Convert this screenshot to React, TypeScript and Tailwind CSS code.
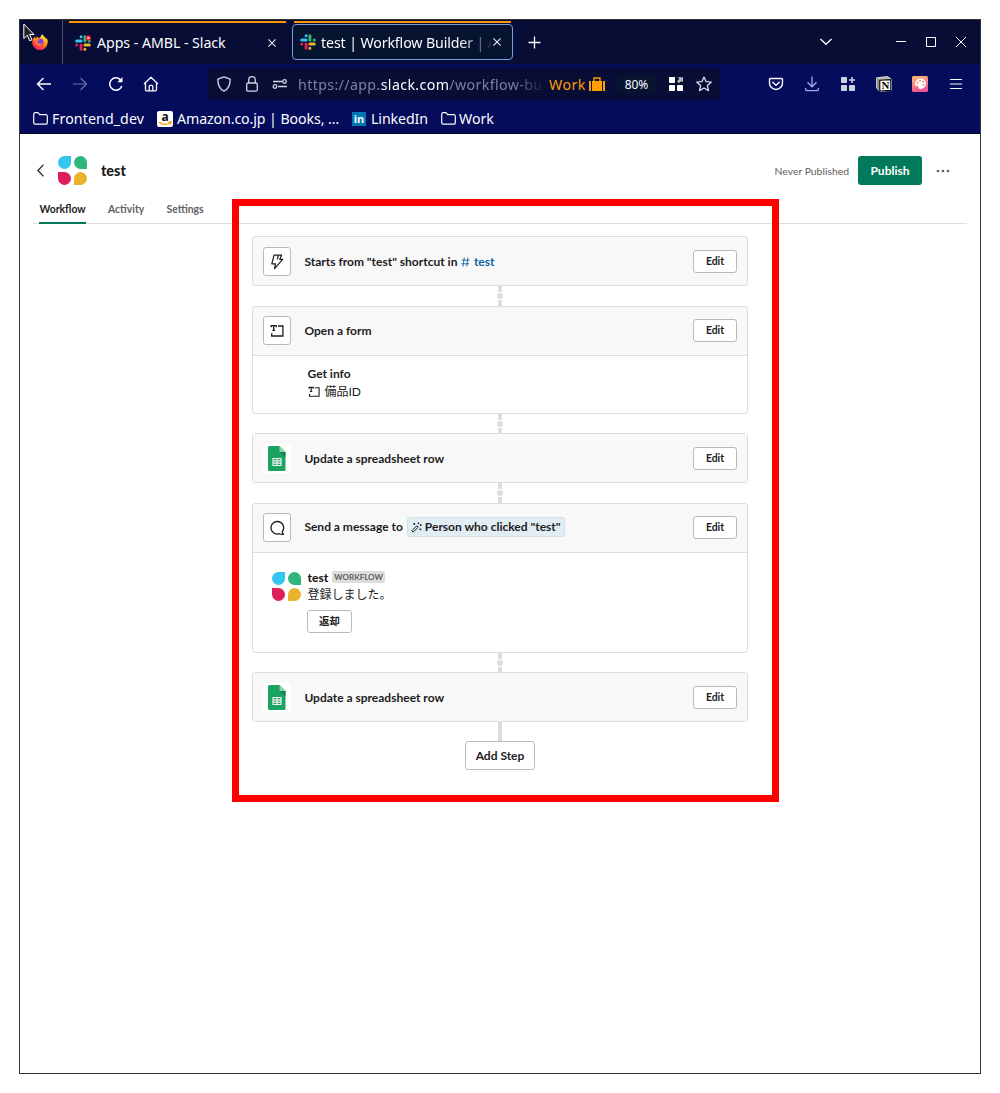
import type { ReactNode } from "react";

function SlackLogo({ badge }: { badge?: boolean }) {
  return (
    <svg width="16" height="16" viewBox="0 0 16 16" className="shrink-0">
      <g strokeWidth="3" strokeLinecap="round" fill="none">
        <path d="M1.7 6.1H6.1M6.1 1.7v.1" stroke="#36c5f0" />
        <path d="M9.9 1.7V6.1M14.2 6.1h.1" stroke="#2eb67d" />
        <path d="M14.3 9.9H9.9M9.9 14.2v.1" stroke="#ecb22e" />
        <path d="M6.1 14.3V9.9M1.7 9.9h.1" stroke="#e01e5a" />
      </g>
      {badge && (
        <>
          <circle cx="13.3" cy="3" r="2.8" fill="#eb1c2c" />
          <circle cx="13.3" cy="3" r="1.1" fill="#fff" />
        </>
      )}
    </svg>
  );
}

function FirefoxLogo() {
  return (
    <svg width="16" height="16" viewBox="0 0 16 16">
      <defs>
        <linearGradient id="fox" x1="0.8" y1="0" x2="0.2" y2="1">
          <stop offset="0" stopColor="#fff44f" />
          <stop offset="0.4" stopColor="#ff980e" />
          <stop offset="0.75" stopColor="#ff3647" />
          <stop offset="1" stopColor="#e31587" />
        </linearGradient>
      </defs>
      <path
        d="M15.5 6c-.4-1-1.1-1.9-1.8-2.2.3.6.4 1.1.4 1.4-.9-2-2.4-2.9-3.6-4.9-1.6.9-2.2 2.4-2.2 3.3-.7 0-1.4.2-2 .6-.5-.5-.4-1.4-.3-1.8-.9.4-1.5 1.1-1.900 1.700-.6 0-.9-.5-.9-1.600C1.400 3.600.3 5.600.2 8a7.700 7.700 0 0 0 15.400 1c.2-1 .2-2.100-.1-3z"
        fill="url(#fox)"
      />
      <circle cx="8" cy="8.200" r="3.400" fill="#7542e5" />
      <path d="M3.500 5.500c1.500-.8 3-.4 4.500.6-1.300 0-1.500 1-2.700 1.200.6 2.700 3.700 3.200 5.600 1.500-.6 3-4 4-6.200 2.200C3 9.600 2.700 7.500 3.500 5.500z" fill="#ff7139" />
    </svg>
  );
}

function Cursor() {
  return (
    <svg width="12" height="20" viewBox="0 0 12 20" className="absolute left-[3px] top-[3px]">
      <path d="M.8 1v14.500l3.500-3.200 2.400 5.500 2.300-1-2.400-5.300h4.400z" fill="#222" stroke="#fff" strokeWidth="1" />
    </svg>
  );
}

function Petals() {
  return (
    <svg width="29" height="29" viewBox="0 0 29 29" className="shrink-0">
      <path d="M6.500 0H13v6.500A6.500 6.500 0 1 1 6.500 0z" fill="#36c5f0" />
      <path d="M22.500 0A6.500 6.500 0 0 1 29 6.500V13h-6.500a6.500 6.500 0 0 1 0-13z" fill="#2eb67d" />
      <path d="M0 16h6.500A6.500 6.500 0 1 1 0 22.500z" fill="#e01e5a" />
      <path d="M22.500 16A6.500 6.500 0 1 1 22.500 29H16v-6.500a6.500 6.500 0 0 1 6.500-6.500z" fill="#ecb22e" />
    </svg>
  );
}

function FormIcon({ size }: { size: number }) {
  return (
    <svg width={size} height={size} viewBox="0 0 14 14" fill="none" stroke="#1d1c1d" strokeWidth="1.300">
      <path d="M1.200 3.300V1.600h5v1.700M3.700 1.600v4.700M2.400 6.400h2.600" />
      <path d="M8 2h4.900v10H1.700V9.300" />
    </svg>
  );
}

function SheetIcon() {
  return (
    <svg width="18" height="25" viewBox="0 0 18 25">
      <path d="M1.500 0H11.500l6 6v17.500A1.500 1.500 0 0 1 16 25H1.500A1.500 1.500 0 0 1 0 23.500v-22A1.500 1.500 0 0 1 1.500 0z" fill="#1ca261" />
      <path d="M11.500 6h6v5.500z" fill="#12814a" />
      <path d="M11.500 0l6 6h-6z" fill="#8ed1b1" />
      <path d="M5 12.500h8v7H5zM5 14.800h8M5 17.200h8M9 12.500v7" fill="none" stroke="#f1f1f1" strokeWidth="1.200" />
    </svg>
  );
}

function BoltIcon() {
  return (
    <svg width="14" height="16" viewBox="0 0 14 16" fill="none" stroke="#1d1c1d" strokeWidth="1.200" strokeLinejoin="round">
      <path d="M4 1.200h7.600L9.700 5.400h3L4.500 14.600l1-4.800H1.800z" />
      <path d="M8.300 1.500L7.300 5.400" />
    </svg>
  );
}

function MessageIcon() {
  return (
    <svg width="16" height="16" viewBox="0 0 16 16" fill="none" stroke="#1d1c1d" strokeWidth="1.300" strokeLinejoin="round">
      <path d="M8 1.500a6.300 6.300 0 1 0 2.500 12.200c1.200.7 2.500.8 3.900.7-.7-.9-1.100-1.800-1-2.900A6.300 6.300 0 0 0 8 1.500z" />
    </svg>
  );
}

function WandIcon() {
  return (
    <svg width="11" height="11" viewBox="0 0 11 11" fill="none" stroke="#1d1c1d" strokeWidth="1">
      <path d="M.8 8.800L5.800 3.800l1.400 1.400L2.200 10.200z" />
      <path d="M3.300 1.100v1.800M2.400 2h1.800M7.500.5v1.600M6.700 1.300h1.600M9.700 2.200v1.800M8.800 3.100h1.800M9.400 6.500v1.800M8.500 7.400h1.800" strokeWidth="1.100" />
    </svg>
  );
}

function NotionIcon() {
  return (
    <svg width="16" height="16" viewBox="0 0 16 16">
      <path d="M.6 1.800L11.500.5l3.900 2.700v11.300L4 15.500.6 12z" fill="#b9b9b2" stroke="#f0f0ec" strokeWidth=".8" />
      <path d="M1.200 2.200L3.800 4.300v10.200L1.200 11.800z" fill="#8a8a84" />
      <path d="M3.800 4.300l11-.7v10.800l-11 .6z" fill="#fff" stroke="#000" strokeWidth="1.100" />
      <text x="9.400" y="13.100" textAnchor="middle" fontSize="11" fontWeight="700" fontFamily="Liberation Serif, serif" fill="#000">
        N
      </text>
    </svg>
  );
}

function CloseIcon() {
  return (
    <svg width="8" height="8" viewBox="0 0 8 8" stroke="#e8e9f5" strokeWidth="1.100" className="shrink-0">
      <path d="M.4.400l7.200 7.200M7.600.400L.4 7.600" />
    </svg>
  );
}

function FolderIcon() {
  return (
    <svg width="15" height="13" viewBox="0 0 15 13" fill="none" stroke="#fbfbfe" strokeWidth="1.200" className="shrink-0">
      <path d="M.7 2.200A1.500 1.500 0 0 1 2.200.7h2.600l2 2h6A1.500 1.500 0 0 1 14.300 4.200v6.500a1.500 1.500 0 0 1-1.500 1.500H2.200a1.500 1.500 0 0 1-1.500-1.500z" />
    </svg>
  );
}

function TabBar() {
  return (
    <div className="relative flex h-11 bg-[#070d34] text-[14.2px] text-[#fbfbfe]">
      <div className="relative w-[43px] border-r border-[#4b5070]">
        <div className="pl-3 pt-3.5">
          <FirefoxLogo />
        </div>
        <Cursor />
      </div>
      <div className="ml-1.5 mt-px w-[217px] border-t-2 border-[#ff9400]">
        <div className="flex h-[40px] items-center pl-1.5">
          <SlackLogo badge />
          <span className="ml-[6px] w-[171px] whitespace-nowrap tracking-[-0.05px]">Apps - AMBL - Slack</span>
          <CloseIcon />
        </div>
      </div>
      <div className="ml-1.5 mt-px w-[221px]">
        <div className="mx-0.5 h-0.5 bg-[#ff9400]" />
        <div className="mt-px flex h-9 items-center rounded border border-[#7c9bdc] bg-[#07142f] pl-[7px]">
          <SlackLogo />
          <span className="ml-[5px] mt-0.5 w-[170px] whitespace-nowrap tracking-[-0.12px] [mask-image:linear-gradient(to_right,black_82%,transparent_102%)]">
            test | Workflow Builder | A
          </span>
          <span className="ml-[2px]">
            <CloseIcon />
          </span>
        </div>
      </div>
      <svg width="13" height="13" viewBox="0 0 13 13" stroke="#fff" strokeWidth="1.300" className="ml-[15px] mt-4">
        <path d="M6.500.5v12M.5 6.500h12" />
      </svg>
      <div className="ml-auto flex items-center pr-[14px]">
        <svg width="14" height="8" viewBox="0 0 14 8" fill="none" stroke="#fbfbfe" strokeWidth="1.300" className="mr-[63px]">
          <path d="M1.500 1L7 6.300 12.500 1" />
        </svg>
        <svg width="10" height="10" viewBox="0 0 10 10" stroke="#fff" className="mr-5">
          <path d="M0 4.500h10" />
        </svg>
        <svg width="10" height="10" viewBox="0 0 10 10" stroke="#fff" fill="none" className="mr-5">
          <path d="M.5.500h9v9h-9z" />
        </svg>
        <svg width="10" height="10" viewBox="0 0 10 10" stroke="#fff">
          <path d="M0 0l10 10M10 0L0 10" />
        </svg>
      </div>
    </div>
  );
}

function NavBar() {
  return (
    <div className="flex h-10 items-center text-[14.2px]">
      <div className="flex w-[188px] items-center pl-4">
        <svg width="16" height="14" viewBox="0 0 16 14" fill="none" stroke="#fbfbfe" strokeWidth="1.400">
          <path d="M7.500 1L1.500 7l6 6M1.500 7H15" />
        </svg>
        <svg width="16" height="14" viewBox="0 0 16 14" fill="none" stroke="#6c71a5" strokeWidth="1.200" className="ml-5">
          <path d="M8.500 1l6 6-6 6M14.500 7H1" />
        </svg>
        <svg width="16" height="16" viewBox="0 0 16 16" fill="none" stroke="#fbfbfe" strokeWidth="1.500" className="ml-5">
          <path d="M13.800 10A6.200 6.200 0 1 1 12.300 3.600" />
          <path d="M14.500 1v5.200H9.300z" fill="#fbfbfe" stroke="none" />
        </svg>
        <svg width="16" height="16" viewBox="0 0 16 16" fill="none" stroke="#fbfbfe" strokeWidth="1.300" strokeLinejoin="round" className="ml-[19px]">
          <path d="M1 8L8 1.200 15 8M2.500 6.800v6.700a1.300 1.300 0 0 0 1.300 1.300h8.400a1.300 1.300 0 0 0 1.300-1.300V6.800M6.200 14.500v-4.200a1 1 0 0 1 1-1h1.600a1 1 0 0 1 1 1v4.200" />
        </svg>
      </div>
      <div className="flex h-8 w-[512px] items-center rounded bg-[#070d34] pl-[9px]">
        <svg width="14" height="16" viewBox="0 0 14 16" fill="none" stroke="#d5d6e5" strokeWidth="1.300" strokeLinejoin="round">
          <path d="M7 .8l6.200 2.400c0 6-1.700 9.800-6.200 12-4.500-2.200-6.200-6-6.200-12z" />
        </svg>
        <svg width="12" height="16" viewBox="0 0 12 16" fill="none" stroke="#d5d6e5" strokeWidth="1.300" className="ml-[15px]">
          <rect x=".7" y="7" width="10.600" height="8.200" rx="1.500" />
          <path d="M2.700 7V4a3.300 3.300 0 0 1 6.600 0v3" />
        </svg>
        <svg width="16" height="10" viewBox="0 0 16 10" fill="none" stroke="#d5d6e5" strokeWidth="1.300" className="ml-[14px]">
          <path d="M1 2.500h9M6 7.500h9" />
          <circle cx="12.500" cy="2.500" r="1.800" />
          <circle cx="3" cy="7.500" r="1.800" />
        </svg>
        <span className="ml-[10px] mt-0.5 w-[244px] whitespace-nowrap tracking-[0.38px] text-[#7d81a6] [mask-image:linear-gradient(to_right,black_88%,transparent_102%)]">
          https://app.<span className="text-[#fbfbfe]">slack.com</span>/workflow-bu
        </span>
        <span className="ml-[7px] mt-0.5 w-[38px] tracking-[0.5px] text-[#ff9f00]">Work</span>
        <svg width="16" height="14" viewBox="0 0 16 14" fill="#ff9f00" className="ml-[2px]">
          <path d="M0 4h2v10H0zM14 4h2v10h-2zM3 4h10v10H3z" />
          <path d="M5 4V1h6v3" fill="none" stroke="#ff9f00" strokeWidth="1.400" />
        </svg>
        <span className="ml-3 flex h-5 w-[39px] items-center justify-center rounded bg-[#07142f] pt-px text-[12px] text-[#fbfbfe]">80%</span>
        <svg width="14" height="14" viewBox="0 0 14 14" fill="#fff" className="ml-[13px]">
          <rect width="6" height="6" rx=".8" />
          <rect y="8" width="6" height="6" rx=".8" />
          <rect x="8" y="8" width="6" height="6" rx=".8" />
          <path d="M8.500.300h5.500V5.500l-1.500-1.500L10 6.300 8 4.300 10.300 2z" fill="#b9b9bd" />
        </svg>
        <svg width="16" height="16" viewBox="0 0 16 16" fill="none" stroke="#d5d6e5" strokeWidth="1.300" strokeLinejoin="round" className="ml-[13px]">
          <path d="M8 1l2.100 4.700 5.100.5-3.800 3.400 1.100 5L8 12l-4.500 2.600 1.100-5L.8 6.200l5.100-.5z" />
        </svg>
      </div>
      <div className="ml-auto flex items-center gap-5 pr-[16px]">
        <svg width="16" height="14" viewBox="0 0 16 14" fill="none" stroke="#fbfbfe" strokeWidth="1.400" strokeLinecap="round" strokeLinejoin="round">
          <path d="M2.500 1.500h11a1 1 0 0 1 1 1v3.500a6.500 6.500 0 0 1-13 0V2.500a1 1 0 0 1 1-1zM4.800 5.300L8 8.300l3.200-3" />
        </svg>
        <svg width="16" height="16" viewBox="0 0 16 16" fill="none" stroke="#99aef0" strokeWidth="1.300">
          <path d="M8 .5v10M3.500 6.300L8 10.800l4.500-4.500M1.700 12v1.500a1.200 1.200 0 0 0 1.200 1.200h10.200a1.200 1.200 0 0 0 1.200-1.200V12" />
        </svg>
        <svg width="16" height="16" viewBox="0 0 16 16" fill="#cfd0e2">
          <rect x="1" y="1" width="6" height="6" rx=".8" />
          <rect x="1" y="9" width="6" height="6" rx=".8" />
          <rect x="9" y="9" width="6" height="6" rx=".8" />
          <path d="M11.200 1h1.600v2.200H15v1.600h-2.200V7h-1.600V4.800H9V3.200h2.200z" />
        </svg>
        <NotionIcon />
        <svg width="16" height="16" viewBox="0 0 16 16">
          <defs>
            <linearGradient id="pal" x1="0" y1="0" x2="0.300" y2="1">
              <stop offset="0" stopColor="#ffbd72" />
              <stop offset="1" stopColor="#ee5594" />
            </linearGradient>
          </defs>
          <rect width="16" height="16" rx="1.500" fill="url(#pal)" />
          <path d="M8.500 2.500a5.500 5.500 0 0 0-5.500 6c0 2 1.500 1.300 2.500 1.300 1.500 0 .5 3.200 2.500 3.200 3.500 0 6-2.500 6-5.500 0-2.800-2.500-5-5.500-5z" fill="#fff" />
          <g fill="#f88a82">
            <circle cx="5.500" cy="6.800" r="1" />
            <circle cx="8" cy="4.800" r="1" />
            <circle cx="11" cy="5.800" r="1" />
            <circle cx="11.500" cy="8.800" r="1" />
          </g>
        </svg>
        <svg width="16" height="16" viewBox="0 0 16 16" stroke="#fbfbfe" strokeWidth="1.200">
          <path d="M2 3.500h12M2 8h12M2 12.500h12" />
        </svg>
      </div>
    </div>
  );
}

function Bookmarks() {
  return (
    <div className="flex h-[30px] items-center whitespace-nowrap border-b border-[#02041c] pl-[13px] text-[14.2px] text-[#fbfbfe]">
      <FolderIcon />
      <span className="ml-1 w-[105px] tracking-[0.1px]">Frontend_dev</span>
      <svg width="16" height="16" viewBox="0 0 16 16" className="shrink-0">
        <rect width="16" height="16" rx="2" fill="#fff" />
        <text x="8" y="10" textAnchor="middle" fontSize="12" fontWeight="700" fontFamily="Open Sans, sans-serif" fill="#111">a</text>
        <path d="M2 11.200c3.500 2.600 8 2.700 11.500.6M11.500 11h2.500l-.6 2.300" fill="none" stroke="#ff9900" strokeWidth="1.300" />
      </svg>
      <span className="ml-1 w-[175px] tracking-[-0.1px]">Amazon.co.jp | Books, …</span>
      <span className="flex h-3.5 w-3.5 items-center justify-center bg-[#0077b5] text-[11px] font-bold leading-none">in</span>
      <span className="ml-[5px] w-[70px] tracking-[-0.1px]">LinkedIn</span>
      <FolderIcon />
      <span className="ml-[3px]">Work</span>
    </div>
  );
}

function AppHeader() {
  return (
    <div className="mx-[13px] border-b border-[#dddddd]">
      <div className="flex h-[51px] items-end">
        <svg width="8" height="13" viewBox="0 0 8 13" fill="none" stroke="#1d1c1d" strokeWidth="1.200" className="mb-2 ml-[4px]">
          <path d="M6.500.7L.9 6.500l5.600 5.800" />
        </svg>
        <div className="ml-[13px]">
          <Petals />
        </div>
        <h1 className="ml-[14px] text-[14.4px] leading-[29px] font-black">test</h1>
        <span className="ml-auto pt-px text-[10.4px] leading-[28px] text-[#616061]">Never Published</span>
        <button className="ml-[9px] h-[29px] w-16 rounded-[3px] bg-[#007a5a] text-[12px] font-bold text-white">Publish</button>
        <svg width="14" height="4" viewBox="0 0 14 4" fill="#616061" className="mr-[17px] mb-3 ml-[14px]">
          <circle cx="2" cy="2" r="1.300" />
          <circle cx="7" cy="2" r="1.300" />
          <circle cx="12" cy="2" r="1.300" />
        </svg>
      </div>
      <div className="flex h-[38px] pl-1.5 text-[10.4px] font-bold text-[#616061]">
        <span className="-mb-px h-[39px] w-[47px] border-b-2 border-[#007a5a] pt-[17px] pl-[0.4px] text-[#1d1c1d]">Workflow</span>
        <span className="ml-[22px] w-[58.500px] pt-[17px]">Activity</span>
        <span className="pt-[17px]">Settings</span>
      </div>
    </div>
  );
}

type StepProps = { icon: ReactNode; plain?: boolean; title: ReactNode; children?: ReactNode };

function Step({ icon, plain, title, children }: StepProps) {
  return (
    <div className="overflow-hidden rounded-[3px] border border-[#dddddd]">
      <div className={children ? "h-12 bg-[#f8f8f8] px-2.5 pt-[9px]" : "h-12 bg-[#f8f8f8] px-2.5 pt-2.5"}>
        <div className="flex h-[29px] items-start">
          <div
            className={
              plain
                ? "flex h-[29px] w-7 items-center justify-center rounded-[3px] bg-white"
                : "flex h-[29px] w-7 items-center justify-center rounded-[3px] border border-[#bbbabb] bg-white"
            }
          >
            {icon}
          </div>
          <div className="mt-[5px] ml-[13.4px] flex h-5 items-center text-[12px] leading-5 font-bold">{title}</div>
          <button className="mt-[3px] ml-auto h-[23px] w-11 rounded-[3px] border border-[#bbbabb] bg-white pt-px text-[10.4px] font-bold">
            Edit
          </button>
        </div>
      </div>
      {children}
    </div>
  );
}

function Connector({ short }: { short?: boolean }) {
  return (
    <div className={short ? "flex h-[19px] flex-col items-center" : "flex h-5 flex-col items-center"}>
      <div className="w-1 flex-1 bg-[#dddddd]" />
      <div className="my-px h-1.5 w-1.5 rounded-full bg-[#dddddd]" />
      <div className="w-1 flex-1 bg-[#dddddd]" />
    </div>
  );
}

export default function App() {
  return (
    <div className="h-[1093px] w-[1000px] bg-white p-[19px] font-['Noto_Sans','Noto_Sans_CJK_JP',sans-serif]">
      <div className="relative h-[1055px] w-[962px] border border-[#333333]">
        <div className="bg-[#050c5c]">
          <TabBar />
          <NavBar />
          <Bookmarks />
        </div>
        <div className="font-['Lato','Noto_Sans_CJK_JP',sans-serif] text-[#1d1c1d]">
          <AppHeader />
          <div className="ml-[232px] mt-3 w-[496px]">
            <Step
              icon={<BoltIcon />}
              title={
                <>
                  Starts from "test" shortcut in
                  <span className="ml-1 flex items-center text-[#1264a3]">
                    <svg width="9" height="10" viewBox="0 0 9 10" stroke="#1264a3" strokeWidth=".9" className="mr-[3.5px]">
                      <path d="M3.300.5L2 9.500M7 .5L5.700 9.500M.6 3.200h8M.2 6.800h8" />
                    </svg>
                    test
                  </span>
                </>
              }
            />
            <Connector />
            <Step icon={<FormIcon size={14} />} title="Open a form">
              <div className="h-[58px] border-t border-[#dddddd] pl-[54.5px] pt-[9px] text-[12px] leading-[18px]">
                <p className="font-bold">Get info</p>
                <p className="flex items-center gap-[5px]">
                  <FormIcon size={12} />
                  備品ID
                </p>
              </div>
            </Step>
            <Connector short />
            <Step plain icon={<SheetIcon />} title="Update a spreadsheet row" />
            <Connector />
            <Step
              icon={<MessageIcon />}
              title={
                <div className="-mt-0.5 flex items-center">
                  Send a message to
                  <span className="ml-1 flex h-5 items-center gap-[3px] rounded-[3px] border border-[#d3dfe5] bg-[#e0edf3] px-[3px]">
                    <WandIcon />
                    Person who clicked "test"
                  </span>
                </div>
              }
            >
              <div className="flex h-[100px] border-t border-[#dddddd] pl-[19px] pt-[19px]">
                <Petals />
                <div className="ml-[6.5px] text-[12px]">
                  <div className="flex h-3 items-center gap-1">
                    <b className="font-black">test</b>
                    <span className="-mt-0.5 h-3 rounded-[2px] bg-[#dddddd] px-0.5 text-[8px] leading-3 font-bold text-[#616061]">WORKFLOW</span>
                  </div>
                  <p className="h-[22px] leading-[22px]">登録しました。</p>
                  <button className="-ml-[0.5px] mt-1 block h-[23px] w-[45px] rounded-[3px] border border-[#bbbabb] pt-px text-[10.4px] font-bold">
                    返却
                  </button>
                </div>
              </div>
            </Step>
            <Connector short />
            <Step plain icon={<SheetIcon />} title="Update a spreadsheet row" />
            <div className="flex flex-col items-center">
              <div className="h-[19px] w-1 bg-[#dddddd]" />
              <button className="h-[29px] w-[70px] rounded-[3px] border border-[#bbbabb] text-[12px] font-bold">Add Step</button>
            </div>
          </div>
        </div>
        {/* highlight frame over the workflow steps */}
        <div className="pointer-events-none absolute left-[212px] top-[179px] h-[603px] w-[547px] border-[7px] border-[#ff0000]" />
      </div>
    </div>
  );
}
